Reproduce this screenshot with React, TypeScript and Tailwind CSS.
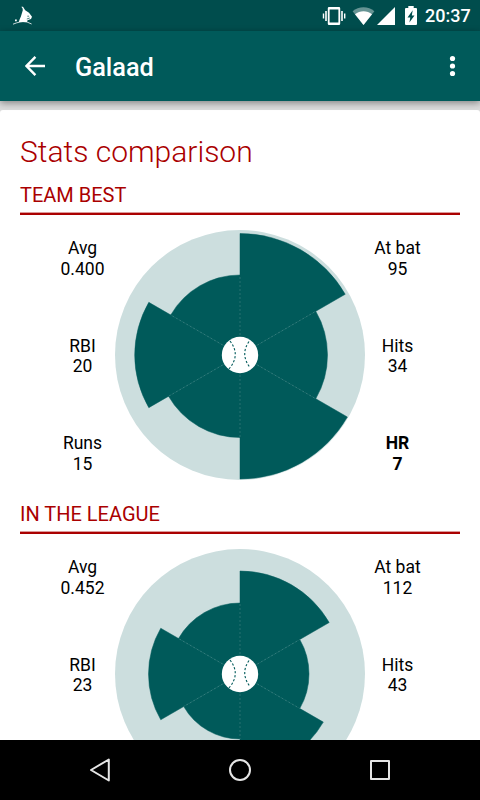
type Stat = {
	label: string;
	value: string;
	radius: number;
	best?: boolean;
};

type Section = {
	title: string;
	// Clockwise, starting at twelve o'clock
	stats: Stat[];
};

const sections: Section[] = [
	{
		title: "TEAM BEST",
		stats: [
			{ label: "At bat", value: "95", radius: 121.5 },
			{ label: "Hits", value: "34", radius: 87.5 },
			{ label: "HR", value: "7", radius: 124, best: true },
			{ label: "Runs", value: "15", radius: 82.5 },
			{ label: "RBI", value: "20", radius: 105.3 },
			{ label: "Avg", value: "0.400", radius: 80 },
		],
	},
	{
		title: "IN THE LEAGUE",
		stats: [
			{ label: "At bat", value: "112", radius: 103 },
			{ label: "Hits", value: "43", radius: 69 },
			{ label: "HR", value: "9", radius: 96.2 },
			{ label: "Runs", value: "21", radius: 65 },
			{ label: "RBI", value: "23", radius: 91.5 },
			{ label: "Avg", value: "0.452", radius: 71 },
		],
	},
];

const CENTER = 125;

function point(radius: number, degrees: number) {
	const angle = (degrees * Math.PI) / 180;
	const x = CENTER + radius * Math.sin(angle);
	const y = CENTER - radius * Math.cos(angle);
	return `${x.toFixed(2)} ${y.toFixed(2)}`;
}

function wedge(radius: number, index: number) {
	const from = index * 60;
	return `M${CENTER} ${CENTER}L${point(radius, from)}A${radius} ${radius} 0 0 1 ${point(radius, from + 60)}Z`;
}

function StatusBar() {
	return (
		<div className="flex h-[31px] shrink-0 items-center justify-between bg-[#004d4d] pr-2.5 pl-3 text-white">
			{/* App notification: sailing boat */}
			<svg width="22" height="20" viewBox="0 0 22 20" fill="currentColor">
				<path d="M9.3 .7 11 .8 13.2 4.2 17 6.8 20 10.7 19 13 15.5 14.2 15 16 6.8 16 7.6 13.6 8.9 10.4 10.8 4.2 10.6 2.4Z" />
				<path d="M3 13.5h1.8v1.8H3z" />
				<path d="M1 18.2 4.5 16.9 8 16 11 15.6 15 16 19.6 18" fill="none" stroke="currentColor" strokeWidth=".8" />
				<path d="M15.3 10.2h1.8M14.8 13l3-1" fill="none" stroke="#004d4d" strokeWidth=".7" />
			</svg>
			<div className="flex items-center">
				{/* Vibrate */}
				<svg width="24" height="20" viewBox="0 0 24 20" fill="currentColor">
					<path fillRule="evenodd" d="M7 1h10a1.2 1.2 0 0 1 1.2 1.2v15.6A1.2 1.2 0 0 1 17 19H7a1.2 1.2 0 0 1-1.2-1.2V2.2A1.2 1.2 0 0 1 7 1Zm.6 2.400v13.200h8.800V3.400Z" />
					<path d="M3.2 5h1.600v10H3.200zM.8 7.500h1.400v5H.8zM19.200 5h1.600v10h-1.600zM22 7.500h1.400v5H22z" />
				</svg>
				{/* Wifi */}
				<svg className="ml-1.5" width="23" height="20" viewBox="0 0 23 20" fill="currentColor">
					<path opacity=".4" d="M11.500 19 .6 5.300C6.500-.2 16.500-.2 22.400 5.300Z" />
					<path d="M11.500 19 3 8.300c4.800-4.200 12.200-4.200 17 0Z" />
				</svg>
				<svg className="ml-0.5" width="18" height="18" viewBox="0 0 18 18" fill="currentColor">
					<path d="M0 18 18 0V18Z" />
				</svg>
				{/* Charging battery */}
				<svg className="ml-2.5" width="12" height="19" viewBox="0 0 12 19" fill="currentColor">
					<path fillRule="evenodd" d="M3.300 0h5.400v2H11a1 1 0 0 1 1 1v15a1 1 0 0 1-1 1H1a1 1 0 0 1-1-1V3a1 1 0 0 1 1-1h2.300ZM7.700 4.300 2.500 11.400h2.800L4.400 16.400 9.500 9.400H6.800Z" />
				</svg>
				<span className="ml-2 w-[45px] text-lg/5 font-medium whitespace-nowrap">20:37</span>
			</div>
		</div>
	);
}

function AppBar() {
	return (
		<header className="relative z-10 flex h-[70px] shrink-0 items-center bg-[#005a5a] pr-5 pl-[25px] text-white shadow-[0_2px_7px_rgba(0,0,0,0.4)]">
			<svg width="20" height="20" viewBox="0 0 20 20" fill="none" stroke="currentColor" strokeWidth="2.4">
				<path d="M10.400.9 1.500 10l8.900 9.100M1.500 10H20" />
			</svg>
			<h1 className="ml-[30px] grow pt-1 text-[25.3px]/8 font-medium">Galaad</h1>
			<svg width="15" height="22" viewBox="0 0 15 22" fill="currentColor">
				<circle cx="7.500" cy="3.500" r="2.600" />
				<circle cx="7.500" cy="11" r="2.600" />
				<circle cx="7.500" cy="18.500" r="2.600" />
			</svg>
		</header>
	);
}

function Chart({ stats }: { stats: Stat[] }) {
	return (
		<svg className="shrink-0" width="250" height="250" viewBox="0 0 250 250">
			<circle cx={CENTER} cy={CENTER} r="125" fill="#ccdede" />
			{stats.map((stat, i) => (
				<path key={stat.label} d={wedge(stat.radius, i)} fill="#005a5a" stroke="#005a5a" strokeWidth=".5" />
			))}
			{/* Faint seams between neighbouring wedges */}
			{stats.map((stat, i) => (
				<path
					key={stat.label}
					d={`M${CENTER} ${CENTER}L${point(Math.min(stat.radius, stats[(i + 1) % 6].radius), (i + 1) * 60)}`}
					stroke="#ccdede"
					strokeOpacity=".28"
					strokeWidth=".7"
					strokeDasharray="2 2"
				/>
			))}
			{/* Baseball */}
			<circle cx={CENTER} cy={CENTER} r="18.2" fill="#fff" />
			<g fill="none" stroke="#005a5a" strokeWidth="1.1" strokeDasharray="2.2 1.9">
				<path d="M115 111Q126 125 114 139" />
				<path d="M134 111.5Q125 124.5 135 137.5" />
			</g>
		</svg>
	);
}

function StatColumn({ stats }: { stats: Stat[] }) {
	return (
		<dl className="flex h-[244px] w-[65px] flex-col justify-between pt-2 text-center text-[17.5px]/[20.5px] text-black">
			{stats.map((stat) => (
				<div key={stat.label} className={stat.best ? "font-bold" : ""}>
					<dt>{stat.label}</dt>
					<dd>{stat.value}</dd>
				</div>
			))}
		</dl>
	);
}

function StatSection({ title, stats }: Section) {
	return (
		<section className="mb-[19px]">
			<h3 className="h-[35px] border-b-2 border-[#aa0000] pt-px text-xl/7 text-[#aa0000] shadow-[inset_0_-1px_0_#dd9999]">
				{title}
			</h3>
			<div className="mt-[15px] flex justify-center">
				<StatColumn stats={[stats[5], stats[4], stats[3]]} />
				<Chart stats={stats} />
				<StatColumn stats={stats.slice(0, 3)} />
			</div>
		</section>
	);
}

function NavBar() {
	return (
		<nav className="flex h-[60px] shrink-0 items-center justify-between bg-black px-[88px] text-[#e6e6e6]">
			<svg width="24" height="24" viewBox="0 0 24 24" fill="none" stroke="currentColor" strokeWidth="2" strokeLinejoin="round">
				<path d="M3 12 20.800 1.500V22.500Z" />
			</svg>
			<svg width="24" height="24" viewBox="0 0 24 24" fill="none" stroke="currentColor" strokeWidth="2">
				<circle cx="12" cy="12" r="10" />
			</svg>
			<svg width="24" height="24" viewBox="0 0 24 24" fill="none" stroke="currentColor" strokeWidth="2" strokeLinejoin="round">
				<path d="M3 3H21V21H3Z" />
			</svg>
		</nav>
	);
}

export default function App() {
	return (
		<div className="flex h-[800px] w-[480px] flex-col overflow-hidden bg-[#dcdcdc] font-[Roboto,sans-serif]">
			<StatusBar />
			<AppBar />
			<main className="mt-[9px] min-h-0 grow overflow-hidden rounded-t-[3px] bg-white px-5 pt-[22px]">
				<h2 className="h-12 text-[30px]/10 font-light text-[#aa0000]">Stats comparison</h2>
				{sections.map((section) => (
					<StatSection key={section.title} {...section} />
				))}
			</main>
			<NavBar />
		</div>
	);
}
